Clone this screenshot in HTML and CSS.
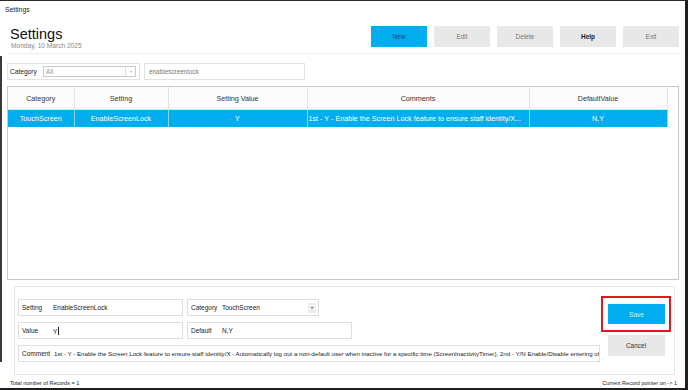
FILE: index.html
```html
<!DOCTYPE html>
<html lang="en">
<head>
    <meta charset="UTF-8">
    <meta name="viewport" content="width=device-width, initial-scale=1.0">
    <title>Settings</title>
    <link rel="stylesheet" href="styles.css">
</head>
<body>
    <div class="frame">
        <div class="titlebar">Settings</div>

        <header class="header">
            <div class="heading">
                <h1>Settings</h1>
                <div class="date">Monday, 10 March 2025</div>
            </div>
            <div class="actions">
                <span class="btn primary">New</span>
                <span class="btn">Edit</span>
                <span class="btn">Delete</span>
                <span class="btn strong">Help</span>
                <span class="btn">Exit</span>
            </div>
        </header>

        <div class="filters">
            <div class="filter-box">
                <span class="filter-label">Category</span>
                <div class="select">
                    <span class="select-value">All</span>
                    <span class="select-arrow">&#9662;</span>
                </div>
            </div>
            <div class="search">enablescreenlock</div>
        </div>

        <div class="grid">
            <table class="records">
                <colgroup>
                    <col style="width: 66px">
                    <col style="width: 94px">
                    <col style="width: 139px">
                    <col style="width: 222px">
                    <col style="width: 138px">
                </colgroup>
                <thead>
                    <tr>
                        <th>Category</th>
                        <th>Setting</th>
                        <th>Setting Value</th>
                        <th>Comments</th>
                        <th>DefaultValue</th>
                    </tr>
                </thead>
                <tbody>
                    <tr class="selected">
                        <td>TouchScreen</td>
                        <td>EnableScreenLock</td>
                        <td>Y</td>
                        <td class="comment-cell">1st - Y - Enable the Screen Lock feature to ensure staff identity/X...</td>
                        <td>N,Y</td>
                    </tr>
                </tbody>
            </table>
        </div>

        <section class="editor">
            <div class="fields">
                <div class="field-row">
                    <div class="field wide">
                        <span class="field-label">Setting</span>
                        <span class="field-value">EnableScreenLock</span>
                    </div>
                    <div class="field narrow">
                        <span class="field-label">Category</span>
                        <span class="field-value">TouchScreen</span>
                        <span class="field-arrow">&#9662;</span>
                    </div>
                </div>
                <div class="field-row">
                    <div class="field wide">
                        <span class="field-label">Value</span>
                        <span class="field-value">Y<span class="caret"></span></span>
                    </div>
                    <div class="field wide">
                        <span class="field-label short">Default</span>
                        <span class="field-value">N,Y</span>
                    </div>
                </div>
                <div class="field-row">
                    <div class="field full">
                        <span class="field-label tight">Comment</span>
                        <span class="field-value comment">1st - Y - Enable the Screen Lock feature to ensure staff identity/X - Automatically log out a non-default user when inactive for a specific time (ScreenInactivityTimer), 2nd - Y/N Enable/Disable entering of staff identity</span>
                    </div>
                </div>
            </div>
            <div class="editor-actions">
                <div class="highlight">
                    <span class="btn primary save">Save</span>
                </div>
                <span class="btn cancel">Cancel</span>
            </div>
        </section>

        <footer class="status">
            <span>Total number of Records = 1</span>
            <span>Current Record pointer on -&gt; 1</span>
        </footer>
    </div>
</body>
</html>
```

FILE: styles.css
```css
body {
    margin: 0;
    background: #1e1e1e;
    font-family: "Liberation Sans", Arial, sans-serif;
    color: #333;
}

.frame {
    position: relative;
    width: 688px;
    height: 390px;
    box-sizing: border-box;
    background: #fff;
    border-top: 1px solid #2a2a2a;
    border-right: 3px solid #1e1e1e;
    border-bottom: 2px solid #1e1e1e;
    display: flex;
    flex-direction: column;
    overflow: hidden;
}

/* dark edge of the window behind, showing on the left */
.frame::before {
    content: "";
    position: absolute;
    left: 0;
    top: 55px;
    bottom: 26px;
    width: 2px;
    background: #3a3a3a;
}

.titlebar {
    height: 18px;
    line-height: 18px;
    padding-left: 5px;
    font-size: 6.8px;
    color: #222;
}

.header {
    margin: 0 3px 0 7px;
    padding: 7px 3px 0 3px;
    box-sizing: border-box;
    height: 35px;
    border-bottom: 1px solid #eeeeee;
    display: flex;
    justify-content: space-between;
    align-items: flex-start;
}

.heading h1 {
    margin: 0;
    font-size: 14.5px;
    line-height: 16px;
    font-weight: normal;
    color: #111;
}

.date {
    margin-top: 0;
    font-size: 6.6px;
    color: #888;
    padding-left: 1px;
}

.actions {
    display: flex;
    gap: 7px;
}

.btn {
    display: flex;
    align-items: center;
    justify-content: center;
    width: 56px;
    height: 21px;
    background: #e8e8e8;
    color: #777;
    font-size: 6.5px;
}

.btn.primary {
    background: #00aeef;
    color: #254a6e;
}

.btn.strong {
    color: #222;
    font-weight: bold;
}

.filters {
    margin: 9px 0 0 7px;
    height: 17px;
    display: flex;
    gap: 4px;
}

.filter-box {
    width: 133px;
    box-sizing: border-box;
    border: 1px solid #e2e2e2;
    display: flex;
    align-items: center;
    padding: 0 3px 0 2px;
}

.filter-label {
    width: 33px;
    font-size: 6.6px;
    color: #222;
}

.select {
    flex: 1;
    height: 11px;
    box-sizing: border-box;
    border: 1px solid #c9c9c9;
    display: flex;
    align-items: center;
    justify-content: space-between;
}

.select-value {
    padding-left: 2px;
    font-size: 6.6px;
    color: #999;
}

.select-arrow {
    width: 9px;
    height: 100%;
    border-left: 1px solid #e0e0e0;
    font-size: 4px;
    color: #aaa;
    display: flex;
    align-items: center;
    justify-content: center;
}

.search {
    width: 161px;
    box-sizing: border-box;
    border: 1px solid #e2e2e2;
    padding-left: 4px;
    display: flex;
    align-items: center;
    font-size: 6.4px;
    color: #777;
}

.grid {
    margin: 6px 0 0 7px;
    width: 672px;
    height: 194px;
    box-sizing: border-box;
    border: 1px solid #c8c8c8;
}

.records {
    border-collapse: collapse;
    table-layout: fixed;
    width: 659px;
    font-size: 7.2px;
}

.records th {
    height: 22px;
    padding: 0;
    font-weight: normal;
    color: #333;
    background: #fcfcfc;
    border-right: 1px solid #e3e3e3;
    border-bottom: 1px solid #e3e3e3;
}

.records td {
    height: 17px;
    padding: 0 2px;
    text-align: center;
    white-space: nowrap;
    overflow: hidden;
    border-right: 1px solid #8fd6f5;
}

.records .selected td {
    background: #00aeef;
    color: #fff;
}

.records td.comment-cell {
    text-align: left;
    padding-left: 1px;
}

.editor {
    margin: 6px 0 0 14px;
    width: 661px;
    height: 89px;
    box-sizing: border-box;
    border: 1px solid #e6e6e6;
    display: flex;
    justify-content: space-between;
}

.fields {
    padding: 12px 0 0 3px;
    display: flex;
    flex-direction: column;
    gap: 6px;
}

.field-row {
    display: flex;
    gap: 4px;
}

.field {
    height: 17px;
    box-sizing: border-box;
    border: 1px solid #dedede;
    display: flex;
    align-items: center;
    padding-left: 3px;
    font-size: 6.5px;
    color: #222;
    overflow: hidden;
    white-space: nowrap;
}

.field.wide {
    width: 165px;
}

.field.narrow {
    width: 132px;
}

.field.full {
    width: 582px;
}

.field-label {
    flex: none;
    width: 31px;
}

.field-label.tight {
    width: 32px;
}

.field-value {
    flex: 1;
    overflow: hidden;
}

.field-value.comment {
    font-size: 6.15px;
}

.caret {
    display: inline-block;
    width: 1px;
    height: 8px;
    margin-left: 1px;
    background: #222;
    vertical-align: -1px;
}

.field-arrow {
    flex: none;
    width: 8px;
    height: 10px;
    margin-right: 2px;
    background: #eeeeee;
    font-size: 4px;
    color: #444;
    display: flex;
    align-items: center;
    justify-content: center;
}

.editor-actions {
    padding: 9px 3px 0 0;
    display: flex;
    flex-direction: column;
    align-items: center;
    gap: 3px;
}

.highlight {
    border: 2px solid #e3151f;
    padding: 6px 4px 6px 5px;
}

.btn.save {
    width: 57px;
    height: 20px;
    color: #d8f1fc;
}

.btn.cancel {
    width: 57px;
    color: #333;
}

.status {
    flex: 1;
    display: flex;
    justify-content: space-between;
    align-items: center;
    padding: 2px 8px 0 10px;
    font-size: 5.5px;
    color: #222;
}
```
